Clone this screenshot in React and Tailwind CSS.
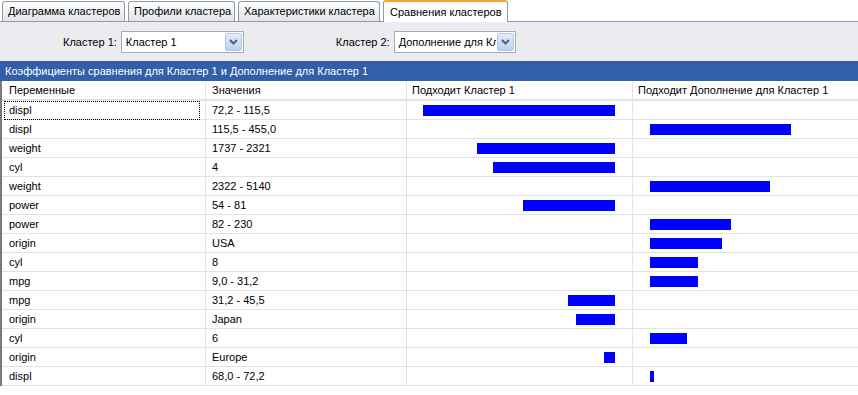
import React from 'react';

const rows = [
  { v: 'displ', r: '72,2 - 115,5', a: 192, b: 0 },
  { v: 'displ', r: '115,5 - 455,0', a: 0, b: 141 },
  { v: 'weight', r: '1737 - 2321', a: 138, b: 0 },
  { v: 'cyl', r: '4', a: 122, b: 0 },
  { v: 'weight', r: '2322 - 5140', a: 0, b: 120 },
  { v: 'power', r: '54 - 81', a: 92, b: 0 },
  { v: 'power', r: '82 - 230', a: 0, b: 81 },
  { v: 'origin', r: 'USA', a: 0, b: 72 },
  { v: 'cyl', r: '8', a: 0, b: 48 },
  { v: 'mpg', r: '9,0 - 31,2', a: 0, b: 48 },
  { v: 'mpg', r: '31,2 - 45,5', a: 47, b: 0 },
  { v: 'origin', r: 'Japan', a: 39, b: 0 },
  { v: 'cyl', r: '6', a: 0, b: 37 },
  { v: 'origin', r: 'Europe', a: 11, b: 0 },
  { v: 'displ', r: '68,0 - 72,2', a: 0, b: 4 },
];

const tabs = [
  { label: 'Диаграмма кластеров', w: 'w-[123px]' },
  { label: 'Профили кластера', w: 'w-[107px]' },
  { label: 'Характеристики кластера', w: 'w-[142px]' },
];

function Combo({ value, width }) {
  return (
    <div className={`flex h-[22px] items-stretch border border-[#a5acb5] bg-white ${width}`}>
      <div className="flex-1 overflow-hidden whitespace-nowrap pl-[4px] leading-[20px]">{value}</div>
      <div className="m-[1px] flex w-[17px] items-center justify-center rounded-[2px] border border-[#b4c8e8] bg-gradient-to-b from-[#e3ecfc] to-[#bcd0f4]">
        <svg width="9" height="6" viewBox="0 0 9 6">
          <path d="M1 1 L4.5 4.5 L8 1" fill="none" stroke="#4d6185" strokeWidth="2" />
        </svg>
      </div>
    </div>
  );
}

function Bar({ w }) {
  return <div className="h-[11px] bg-[#0000ff]" style={{ width: w }} />;
}

export default function App() {
  return (
    <div className="relative h-[395px] w-[858px] overflow-hidden bg-white text-[11px] text-black" style={{ fontFamily: '"Liberation Sans", Arial, sans-serif' }}>
      {/* tab strip */}
      <div className="flex h-[22px] items-end gap-[3px] border-b border-[#919b9c] pl-[2px]">
        {tabs.map((t) => (
          <div key={t.label} className={`flex h-[20px] items-center rounded-t-[3px] border border-b-0 border-[#919b9c] bg-gradient-to-b from-white to-[#e1e4ec] pl-[5px] ${t.w}`}>
            {t.label}
          </div>
        ))}
        <div className="-mb-[1px] flex h-[22px] w-[125px] items-center rounded-t-[3px] border border-b-0 border-t-[2px] border-[#919b9c] border-t-[#f2a735] bg-white pl-[6px]">
          Сравнения кластеров
        </div>
      </div>

      {/* selectors */}
      <div className="flex h-[39px] items-center bg-[#ecebef] pt-[1px]">
        <span className="ml-[63px] mr-[4px]">Кластер 1:</span>
        <Combo value="Кластер 1" width="w-[123px]" />
        <span className="ml-[92px] mr-[4px]">Кластер 2:</span>
        <Combo value="Дополнение для Кластер 1" width="w-[122px]" />
      </div>

      {/* caption */}
      <div className="flex h-[20px] items-center bg-[#335ea8] pl-[5px] text-white">
        Коэффициенты сравнения для Кластер 1 и Дополнение для Кластер 1
      </div>

      {/* grid */}
      <div className="border-l-2 border-[#7a7a7a] pt-[1px]">
        <div className="grid h-[19px] grid-cols-[204px_201px_226px_1fr] border-b-2 border-[#e3e3e3]">
          <div className="flex items-center border-r border-[#e3e3e3] pl-[7px]">Переменные</div>
          <div className="flex items-center border-r border-[#e3e3e3] pl-[6px]">Значения</div>
          <div className="flex items-center border-r border-[#e3e3e3] pl-[5px]">Подходит Кластер 1</div>
          <div className="flex items-center pl-[5px]">Подходит Дополнение для Кластер 1</div>
        </div>
        {rows.map((row, i) => (
          <div key={i} className="grid h-[19px] grid-cols-[204px_201px_226px_1fr] border-b border-[#e3e3e3]">
            <div className="flex items-center border-r border-[#e3e3e3] pl-[7px]">
              <span className={i === 0 ? 'flex h-full w-full items-center border border-dotted border-black -ml-[5px] pl-[4px]' : ''}>{row.v}</span>
            </div>
            <div className="flex items-center border-r border-[#e3e3e3] pl-[6px]">{row.r}</div>
            <div className="flex items-center justify-end border-r border-[#e3e3e3] pr-[17px]">{row.a > 0 && <Bar w={row.a} />}</div>
            <div className="flex items-center pl-[17px]">{row.b > 0 && <Bar w={row.b} />}</div>
          </div>
        ))}
      </div>
    </div>
  );
}
